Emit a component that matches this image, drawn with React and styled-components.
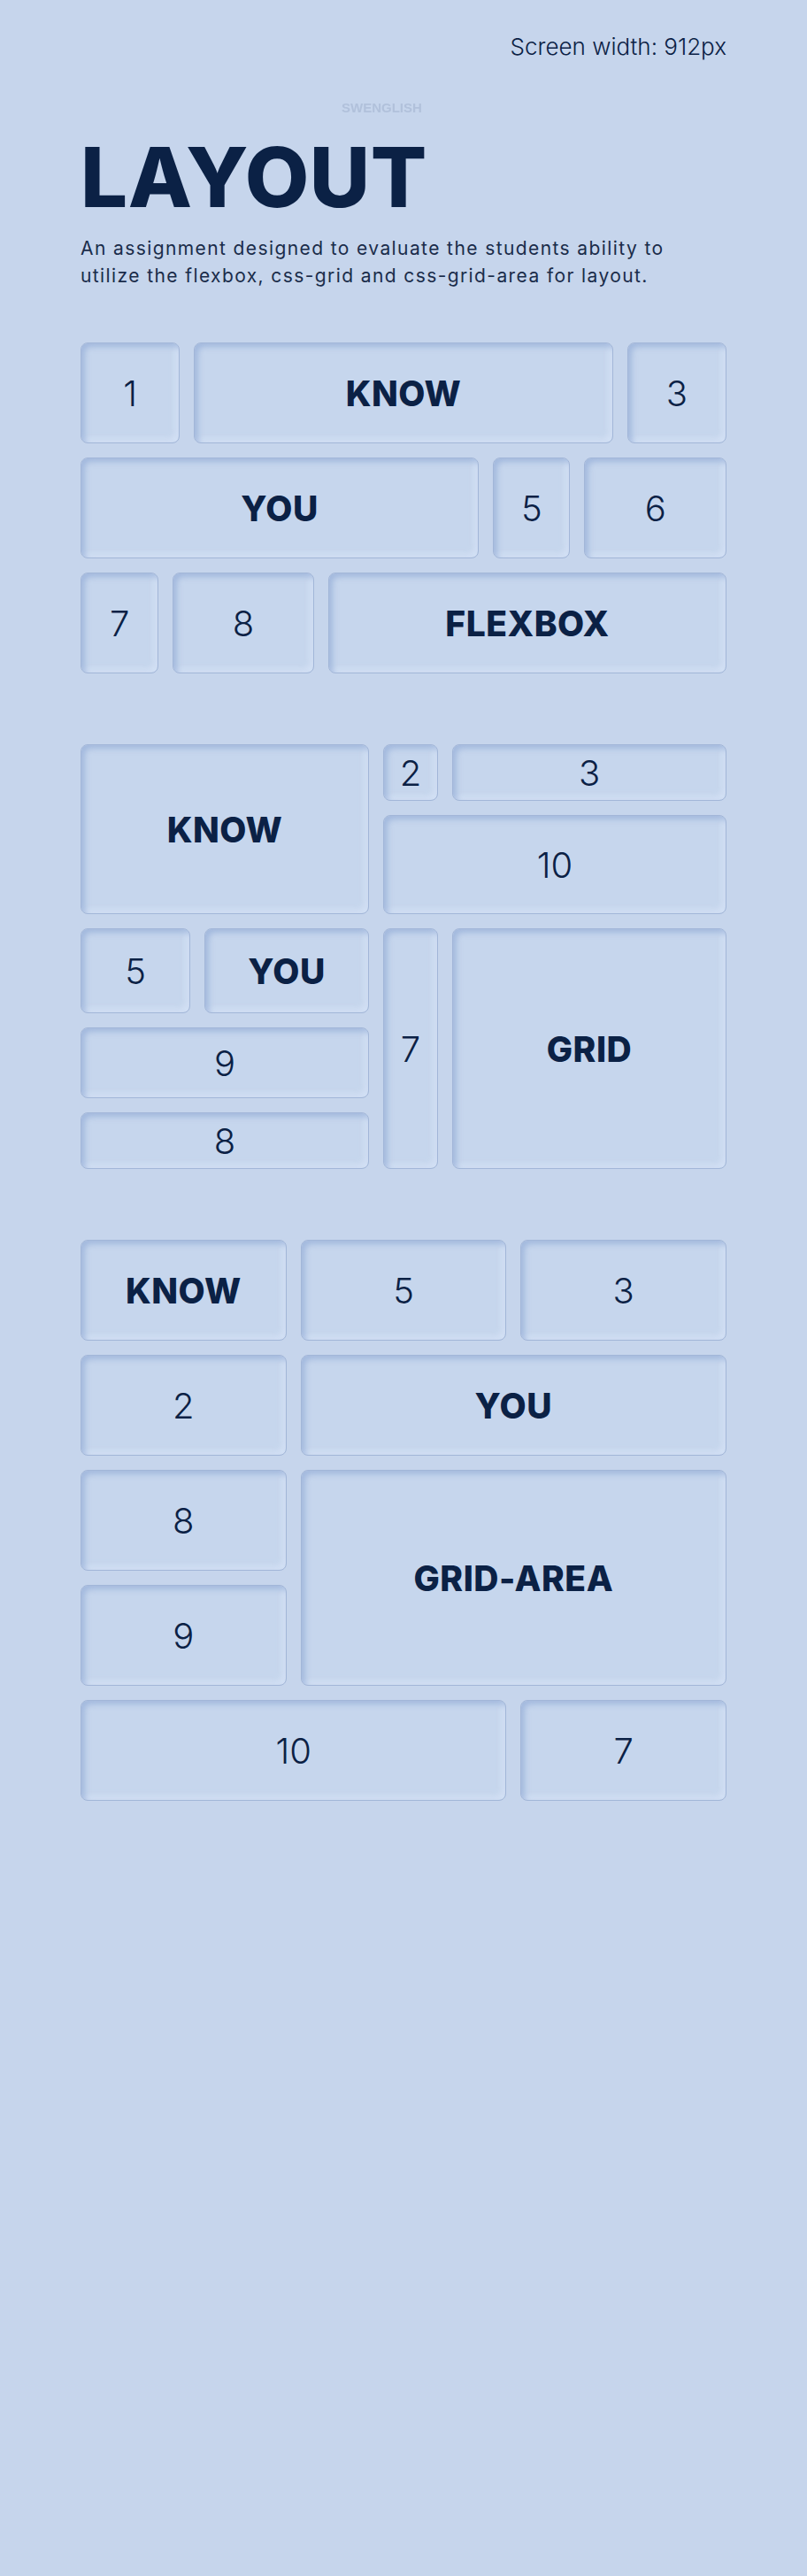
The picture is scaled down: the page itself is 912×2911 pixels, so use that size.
import React from "react"
import styled, { createGlobalStyle, css } from "styled-components"

const GlobalStyle = createGlobalStyle`
    body {
        margin: 0;
        background-color: #c6d5ec;
        font-family: "Inter", "Noto Sans", sans-serif;
        color: #0b2145;
    }
`

const Page = styled.div`
    width: 730px;
    min-height: 2911px;
    margin: 0 auto;
    padding-bottom: 80px;
    box-sizing: border-box;
`

const TopBar = styled.div`
    display: flex;
    justify-content: flex-end;
    padding-top: 37px;
    font-size: 26px;
    font-weight: 300;
    line-height: 32px;
`

const Watermark = styled.div`
    margin-top: 44px;
    padding-left: 295px;
    font-family: "Liberation Sans", sans-serif;
    font-weight: 700;
    font-size: 15px;
    line-height: 18px;
    color: #b1c1db;
    filter: blur(0.6px);
`

const Title = styled.h1`
    margin: 19px 0 0;
    font-size: 94px;
    font-weight: 800;
    line-height: 100px;
    letter-spacing: 0.5px;
    color: #0b2145;
`

const Intro = styled.p`
    margin: 15px 0 0;
    width: 680px;
    font-size: 21px;
    font-weight: 400;
    line-height: 31px;
    letter-spacing: 1.4px;
    color: #1a2c4a;
`

const Section = styled.section`
    margin-top: ${(p) => p.top || 80}px;
`

const FlexRows = styled.div`
    display: flex;
    flex-direction: column;
    gap: 16px;
`

const FlexRow = styled.div`
    display: flex;
    gap: 16px;
    height: 114px;
`

const Grid = styled.div`
    display: grid;
    gap: 16px;
    grid-template-columns: ${(p) => p.cols};
    grid-template-rows: ${(p) => p.rows};
    ${(p) =>
        p.areas &&
        css`
            grid-template-areas: ${p.areas};
        `}
`

const Tile = styled.div`
    flex: ${(p) => (p.grow ? `${p.grow} 1 0` : "none")};
    ${(p) =>
        p.col &&
        css`
            grid-column: ${p.col};
        `}
    ${(p) =>
        p.row &&
        css`
            grid-row: ${p.row};
        `}
    ${(p) =>
        p.area &&
        css`
            grid-area: ${p.area};
        `}
    display: flex;
    align-items: center;
    justify-content: center;
    box-sizing: border-box;
    border: 1px solid #a2b6d8;
    border-radius: 8px;
    background-color: #c6d6ed;
    box-shadow: inset 4px 4px 6px rgba(135, 162, 210, 0.55), inset -4px -4px 6px rgba(222, 234, 252, 0.55);
    font-size: ${(p) => (p.word ? "39px" : "40px")};
    font-weight: ${(p) => (p.word ? 800 : 300)};
    letter-spacing: ${(p) => (p.word ? "0.5px" : "0")};
    color: #0b2145;
`

const App = () => {
    return (
        <>
            <GlobalStyle />
            <Page>
                <TopBar>Screen width: 912px</TopBar>
                <Watermark>SWENGLISH</Watermark>
                <Title>LAYOUT</Title>
                <Intro>
                    An assignment designed to evaluate the students ability to utilize the flexbox, css-grid and
                    css-grid-area for layout.
                </Intro>

                {/* flexbox */}
                <Section top={60}>
                    <FlexRows>
                        <FlexRow>
                            <Tile grow={111}>1</Tile>
                            <Tile grow={476} word>
                                KNOW
                            </Tile>
                            <Tile grow={111}>3</Tile>
                        </FlexRow>
                        <FlexRow>
                            <Tile grow={452} word>
                                YOU
                            </Tile>
                            <Tile grow={86}>5</Tile>
                            <Tile grow={160}>6</Tile>
                        </FlexRow>
                        <FlexRow>
                            <Tile grow={87}>7</Tile>
                            <Tile grow={159}>8</Tile>
                            <Tile grow={452} word>
                                FLEXBOX
                            </Tile>
                        </FlexRow>
                    </FlexRows>
                </Section>

                {/* css-grid */}
                <Section>
                    <Grid cols="124px 186px 62px 1fr" rows="64px 112px 96px 80px 64px">
                        <Tile col="1 / 3" row="1 / 3" word>
                            KNOW
                        </Tile>
                        <Tile col="3" row="1">
                            2
                        </Tile>
                        <Tile col="4" row="1">
                            3
                        </Tile>
                        <Tile col="3 / 5" row="2">
                            10
                        </Tile>
                        <Tile col="1" row="3">
                            5
                        </Tile>
                        <Tile col="2" row="3" word>
                            YOU
                        </Tile>
                        <Tile col="1 / 3" row="4">
                            9
                        </Tile>
                        <Tile col="1 / 3" row="5">
                            8
                        </Tile>
                        <Tile col="3" row="3 / 6">
                            7
                        </Tile>
                        <Tile col="4" row="3 / 6" word>
                            GRID
                        </Tile>
                    </Grid>
                </Section>

                {/* css-grid-area */}
                <Section>
                    <Grid
                        cols="1fr 1fr 1fr"
                        rows="repeat(5, 114px)"
                        areas={`"know five three" "two you you" "eight ga ga" "nine ga ga" "ten ten seven"`}
                    >
                        <Tile area="know" word>
                            KNOW
                        </Tile>
                        <Tile area="five">5</Tile>
                        <Tile area="three">3</Tile>
                        <Tile area="two">2</Tile>
                        <Tile area="you" word>
                            YOU
                        </Tile>
                        <Tile area="eight">8</Tile>
                        <Tile area="nine">9</Tile>
                        <Tile area="ga" word>
                            GRID-AREA
                        </Tile>
                        <Tile area="ten">10</Tile>
                        <Tile area="seven">7</Tile>
                    </Grid>
                </Section>
            </Page>
        </>
    )
}

export default App
